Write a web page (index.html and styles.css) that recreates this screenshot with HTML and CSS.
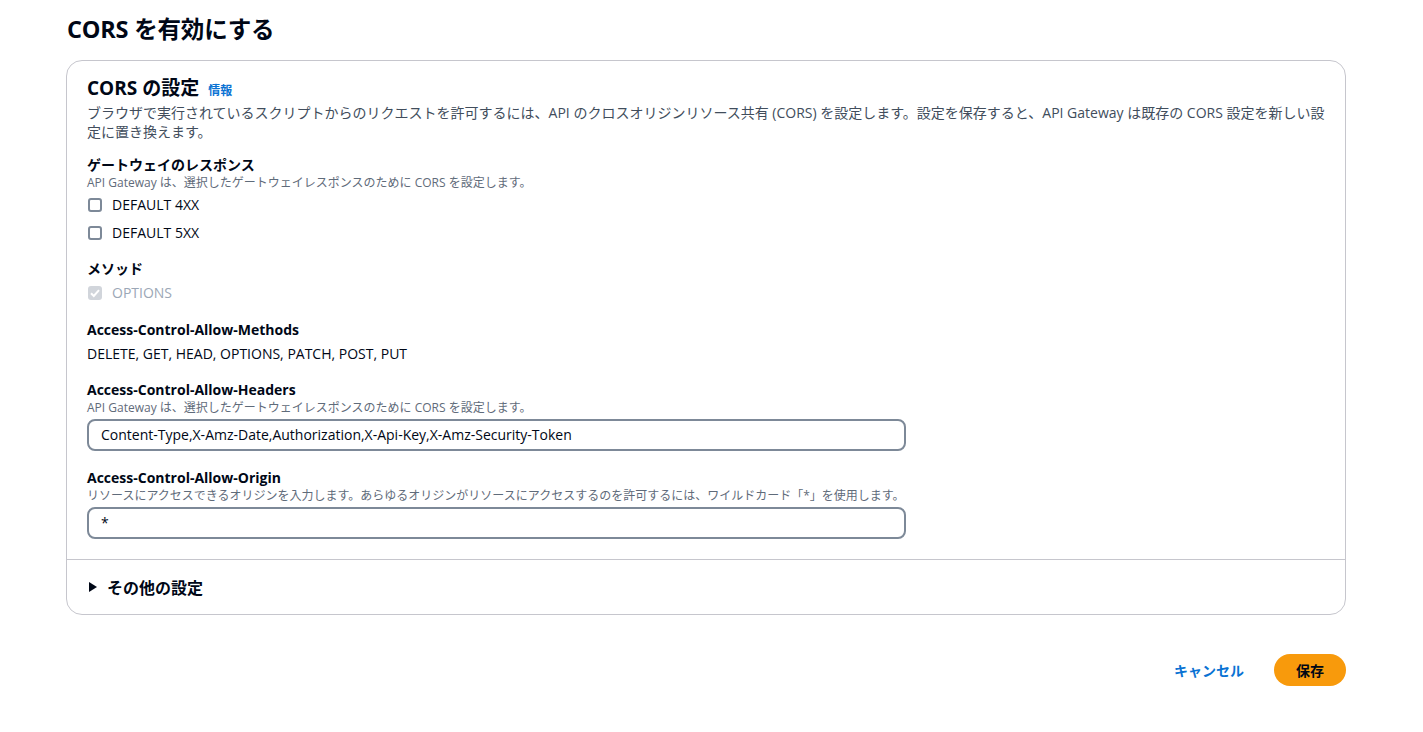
FILE: index.html
```html
<!DOCTYPE html>
<html lang="ja">
<head>
<meta charset="utf-8">
<link rel="stylesheet" href="styles.css">
</head>
<body>
<div class="page">
  <h1 class="title">CORS を有効にする</h1>
  <div class="container">
    <div class="body">
      <div class="header">
        <h2 class="h2">CORS の設定</h2><a class="info">情報</a>
      </div>
      <p class="desc">ブラウザで実行されているスクリプトからのリクエストを許可するには、API のクロスオリジンリソース共有 (CORS) を設定します。設定を保存すると、API Gateway は既存の CORS 設定を新しい設定に置き換えます。</p>

      <div class="field">
        <div class="label">ゲートウェイのレスポンス</div>
        <div class="hint">API Gateway は、選択したゲートウェイレスポンスのために CORS を設定します。</div>
        <label class="check"><span class="box"></span>DEFAULT 4XX</label>
        <label class="check"><span class="box"></span>DEFAULT 5XX</label>
      </div>

      <div class="field">
        <div class="label">メソッド</div>
        <label class="check disabled"><span class="box checked"><svg viewBox="0 0 14 14" width="14" height="14"><path d="M3 7.2 L5.8 10 L11 4.2" fill="none" stroke="#fff" stroke-width="2"/></svg></span>OPTIONS</label>
      </div>

      <div class="field field-wide">
        <div class="label">Access-Control-Allow-Methods</div>
        <div class="value">DELETE, GET, HEAD, OPTIONS, PATCH, POST, PUT</div>
      </div>

      <div class="field field-wide">
        <div class="label">Access-Control-Allow-Headers</div>
        <div class="hint">API Gateway は、選択したゲートウェイレスポンスのために CORS を設定します。</div>
        <div class="input">Content-Type,X-Amz-Date,Authorization,X-Api-Key,X-Amz-Security-Token</div>
      </div>

      <div class="field field-last">
        <div class="label">Access-Control-Allow-Origin</div>
        <div class="hint">リソースにアクセスできるオリジンを入力します。あらゆるオリジンがリソースにアクセスするのを許可するには、ワイルドカード「*」を使用します。</div>
        <div class="input">*</div>
      </div>
    </div>
    <div class="footer">
      <span class="caret"></span><span class="more">その他の設定</span>
    </div>
  </div>
  <div class="actions">
    <a class="cancel">キャンセル</a>
    <button class="save">保存</button>
  </div>
</div>
</body>
</html>
```

FILE: styles.css
```css
* { box-sizing: border-box; }
body {
  margin: 0;
  font-family: "Open Sans", "Noto Sans CJK JP", sans-serif;
  color: #000716;
  background: #fff;
}
.page {
  padding: 12px 77px 0 66px;
}
.title {
  font-size: 23.5px;
  font-weight: 700;
  line-height: 34px;
  margin: 0 0 14px 1px;
  letter-spacing: -0.2px;
}
.container {
  border: 1px solid #c6c6cd;
  border-radius: 16px;
}
.body {
  padding: 15px 17px 20px 20px;
}
.header {
  display: flex;
  align-items: baseline;
  gap: 9px;
  margin-bottom: 3px;
}
.h2 {
  font-size: 19px;
  font-weight: 700;
  line-height: 24px;
  margin: 0;
}
.info {
  font-size: 12px;
  font-weight: 700;
  color: #0972d3;
}
.desc {
  margin: 0;
  font-size: 14px;
  line-height: 19px;
  color: #414d5c;
}
.field {
  margin-top: 14px;
}
.field + .field {
  margin-top: 15px;
}
.field + .field-wide {
  margin-top: 16px;
}
.field + .field-last {
  margin-top: 17px;
}
.label {
  font-size: 14px;
  font-weight: 700;
  line-height: 20px;
}
.hint {
  font-size: 12px;
  line-height: 16px;
  color: #5f6b7a;
}
.check {
  display: flex;
  align-items: center;
  gap: 10px;
  font-size: 14px;
  line-height: 20px;
  margin-top: 3px;
  height: 22px;
  padding-left: 1px;
}
.check + .check { margin-top: 6px; }
.box {
  width: 14px;
  height: 14px;
  border: 2px solid #7d8998;
  border-radius: 3px;
  display: inline-flex;
  align-items: center;
  justify-content: center;
}
.box.checked {
  border: none;
  background: #d1d5db;
}
.disabled { color: #9ba7b6; margin-top: 3px; }
.value {
  font-size: 14px;
  line-height: 20px;
  margin-top: 4px;
}
.input {
  margin-top: 3px;
  width: 819px;
  height: 32px;
  border: 2px solid #7d8998;
  border-radius: 8px;
  padding: 0 12px;
  font-size: 14px;
  line-height: 28px;
}
.footer {
  border-top: 1px solid #c6c6cd;
  height: 55px;
  display: flex;
  align-items: center;
  padding: 0 0 1px 22px;
  gap: 10px;
}
.caret {
  width: 0;
  height: 0;
  border-top: 5px solid transparent;
  border-bottom: 5px solid transparent;
  border-left: 8px solid #000716;
}
.more {
  font-size: 16px;
  font-weight: 700;
}
.actions {
  display: flex;
  justify-content: flex-end;
  align-items: center;
  gap: 30px;
  margin-top: 39px;
}
.cancel {
  font-size: 14px;
  font-weight: 700;
  color: #0972d3;
}
.save {
  font-family: inherit;
  background: #f89a0c;
  border: none;
  border-radius: 16px;
  height: 32px;
  width: 72px;
  font-size: 14px;
  font-weight: 700;
  color: #000716;
}
```
